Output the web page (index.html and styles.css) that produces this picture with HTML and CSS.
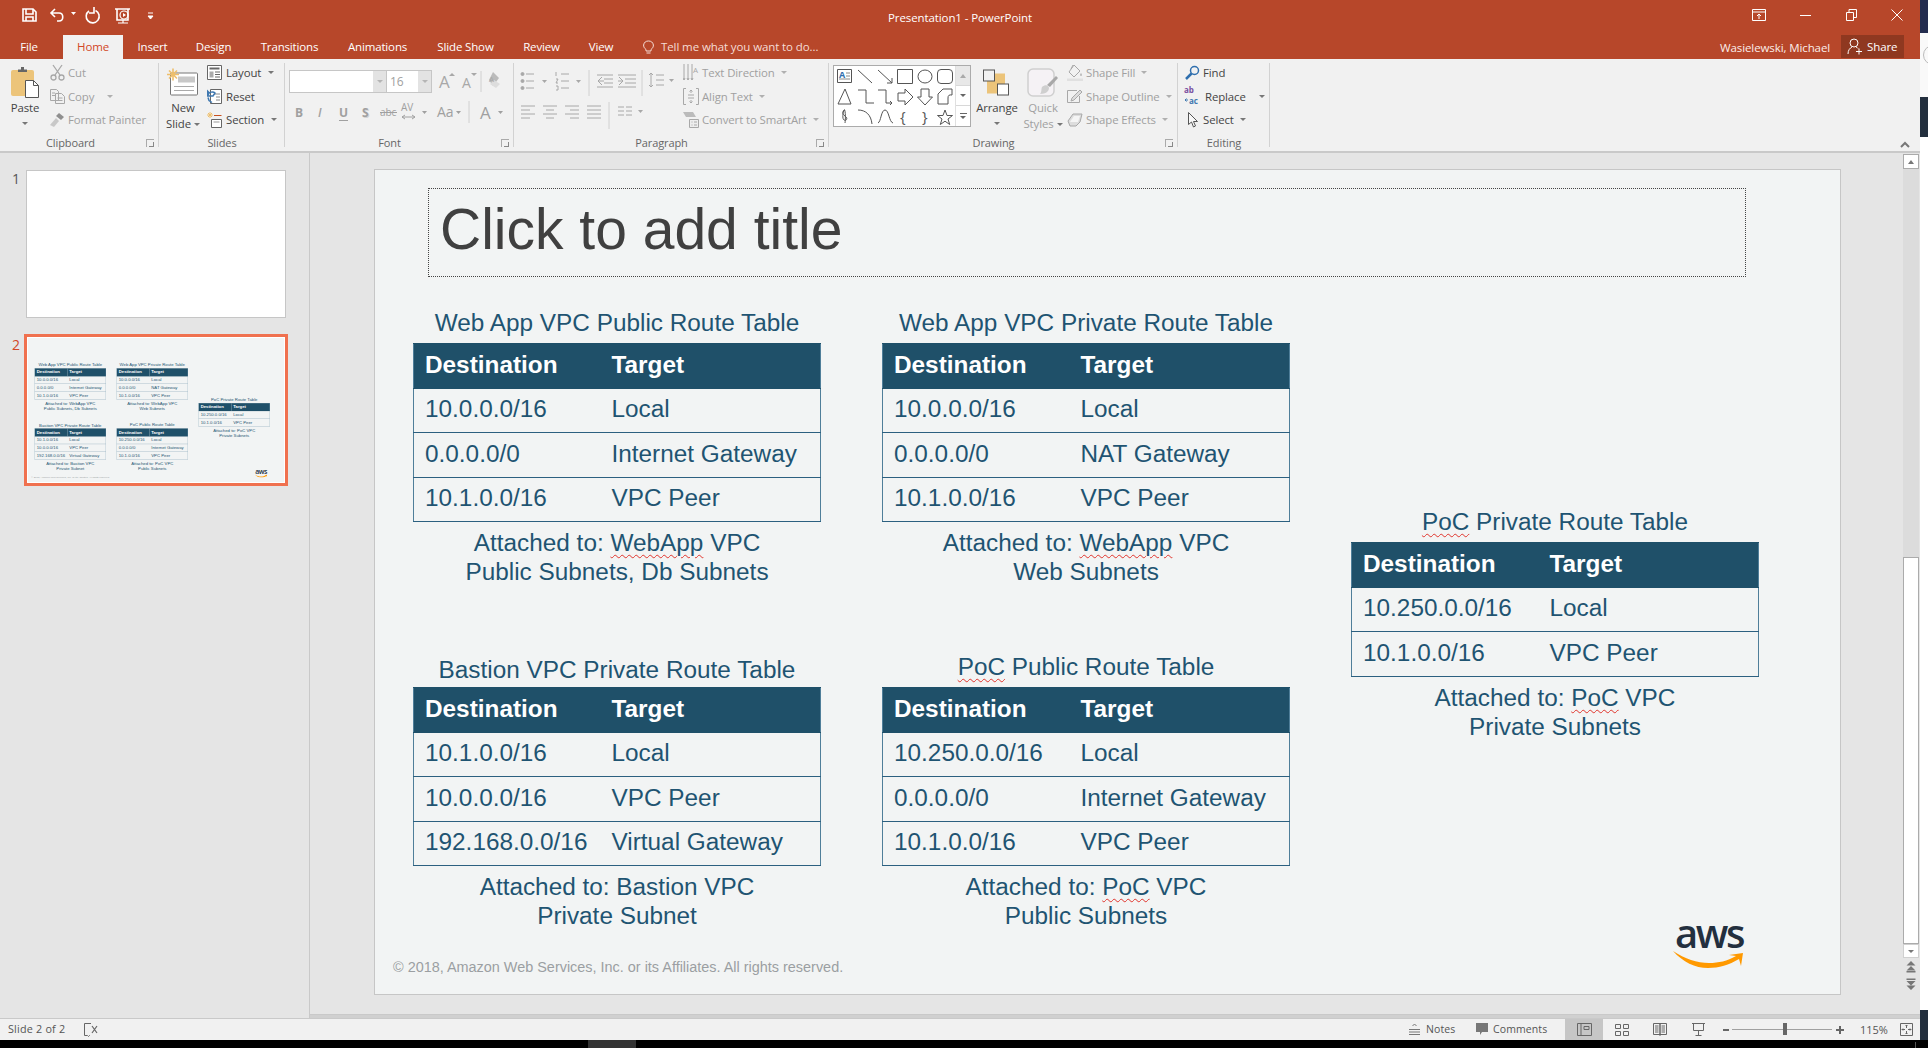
FILE: index.html
```html
<!DOCTYPE html>
<html lang="en">
<head>
<meta charset="utf-8">
<title>Presentation1 - PowerPoint</title>
<link rel="stylesheet" href="styles.css">
</head>
<body>
<div class="screen">
  <div class="upper">
    <div class="window">
      <header class="titlebar">
        <div class="title-row">
          <div class="qat">
            <svg class="qat-svg" width="170" height="35" viewBox="0 0 170 35" fill="none" stroke="#fff" stroke-width="1.6">
              <path d="M23 9h10l3 3v9H23z"/><path d="M26 9v5h7V9M26 21v-4h7v4"/>
              <path d="M55 9l-4 4 4 4M51 13h8c5 0 5 8 0 8h-2"/><path d="M71 12h5l-2.5 3z" fill="#fff" stroke="none"/>
              <path d="M95.500 10.500a6.500 6.500 0 1 1-6.500 .5"/><path d="M94 7v6h-5"/>
              <path d="M115 9h15M117 9v11h11V9"/><circle cx="124" cy="15" r="4" stroke-width="1.200"/><path d="M123 13l3 2-3 2z" fill="#fff" stroke="none"/><path d="M118 23h10M123 20v3" stroke-width="1.200"/>
              <path d="M148 13h5M148 16h5l-2.5 3z" fill="#fff" stroke-width="1"/>
            </svg>
          </div>
          <div class="doc-title">Presentation1 - PowerPoint</div>
          <div class="win-controls">
            <svg width="14" height="12" viewBox="0 0 14 12" fill="none" stroke="#fff"><path d="M.5.500h13v11H.5zM.5 3h13M7 10V5M5 7l2-2 2 2"/></svg>
            <svg width="11" height="11" viewBox="0 0 11 11" fill="none" stroke="#fff"><path d="M0 5.500h11"/></svg>
            <svg width="11" height="12" viewBox="0 0 11 12" fill="none" stroke="#fff"><path d="M.5 3.500h7v8h-7zM3 3.500V.5h7.500v8h-3"/></svg>
            <svg width="12" height="12" viewBox="0 0 12 12" fill="none" stroke="#fff"><path d="M.5.500l11 11M11.500.5l-11 11"/></svg>
          </div>
        </div>
        <div class="tab-row">
          <nav class="tabs">
            <span>File</span><span class="tab-on">Home</span><span>Insert</span><span>Design</span><span>Transitions</span><span>Animations</span><span>Slide Show</span><span>Review</span><span>View</span>
          </nav>
          <div class="tell">
            <svg width="11" height="16" viewBox="0 0 11 16" fill="none" stroke="#f5dcd5"><path d="M3 10.500C1 9 .6 7.500.6 6a5 5 0 0 1 9.800 0c0 1.500-.4 3-2.400 4.500V12H3zM3.500 14h4"/></svg>
            <span>Tell me what you want to do...</span>
          </div>
          <div class="user">Wasielewski, Michael</div>
          <div class="share">
            <svg width="16" height="17" viewBox="0 0 16 17" fill="none" stroke="#fff"><circle cx="7" cy="5" r="4"/><path d="M1 16c0-4 2-6 4-7M9 9c1 .3 1.500.8 2 1.500M9 13.500h6M12 10.500v6"/></svg>
            <span>Share</span>
          </div>
        </div>
      </header>

      <section class="ribbon">
        <div class="group g-clip">
          <div class="g-body">
            <div class="big b-paste">
              <svg width="30" height="31" viewBox="0 0 30 31"><rect x="1" y="3" width="23" height="26" rx="2" fill="#ecc47a"/><path d="M8 5V2.500h3V0h3v2.500h3V5z" fill="#666"/><path d="M15.500 13.500h8l5 5v12h-13z" fill="#fff" stroke="#555"/><path d="M23.500 13.500v5h5" fill="none" stroke="#555"/></svg>
              <span class="t-dark">Paste</span><i class="caret big-caret"></i>
            </div>
            <div class="col col-clip">
              <div class="sbtn off"><svg width="15" height="17" viewBox="0 0 15 17" fill="none" stroke="#a8a8a8" stroke-width="1.300"><path d="M3 1l7 10M12 1L5 11"/><circle cx="3.500" cy="13.500" r="2.500"/><circle cx="11.500" cy="13.500" r="2.500"/></svg><span>Cut</span></div>
              <div class="sbtn off"><svg width="15" height="15" viewBox="0 0 15 15" fill="none" stroke="#a8a8a8"><path d="M.5.500h6l2 2v9h-8z"/><path d="M5.500 4.500h6l3 3v7h-9zM2 4h3M2 6.500h3M7.500 9h5M7.500 11.500h5"/></svg><span>Copy</span><i class="caret wide"></i></div>
              <div class="sbtn off"><svg width="15" height="16" viewBox="0 0 15 16"><path d="M9 1l5 4-3 3-5-4z" fill="#8f8f8f"/><path d="M6 6l3 3-5 6-4-2z" fill="#c8c8c8"/></svg><span>Format Painter</span></div>
            </div>
          </div>
          <div class="g-label"><span>Clipboard</span><i class="launch"></i></div>
        </div>

        <div class="group g-slides">
          <div class="g-body">
            <div class="big b-new">
              <svg width="32" height="28" viewBox="0 0 32 28"><rect x="3.500" y="4.500" width="27" height="22" rx="1" fill="#fff" stroke="#777"/><rect x="11" y="8" width="17" height="6" fill="#c8c8c8"/><path d="M7 18h20M7 22h20" stroke="#aaa"/><path d="M6 0v12M0 6h12M2 2l8 8M10 2l-8 8" stroke="#eebf6c" stroke-width="1.600"/></svg>
              <span class="t-dark">New</span><span class="t-dark">Slide<i class="caret"></i></span>
            </div>
            <div class="col col-slides">
              <div class="sbtn"><svg width="15" height="15" viewBox="0 0 15 15" fill="#fff" stroke="#666"><path d="M.5.500h14v14H.5z"/><path d="M2.500 3.500h10" stroke-width="2"/><path d="M2.500 6.500h4v6h-4z" fill="#aaa" stroke="none"/><path d="M8 7h5M8 9.500h5M8 12h5" /></svg><span>Layout</span><i class="caret"></i></div>
              <div class="sbtn"><svg width="15" height="15" viewBox="0 0 15 15" fill="none"><path d="M3.500.500h11v14h-11z" fill="#fff" stroke="#666"/><path d="M7 5h6M9 8h4M9 11h4" stroke="#888"/><path d="M1 6c1-3 5-4 7-2L6 7H.500V2l2 2M1 8.500l1 3 3 2" stroke="#3f78b0" stroke-width="1.500"/></svg><span>Reset</span></div>
              <div class="sbtn"><svg width="15" height="16" viewBox="0 0 15 16" fill="none"><path d="M3 0v6M0 3h6M1 1l4 4M5 1L1 5" stroke="#eebf6c"/><path d="M7 3.500h7.500" stroke="#c8501f"/><path d="M4.500 7.500h10v8h-10z" fill="#fff" stroke="#666"/><path d="M6.500 10h6" stroke="#999"/></svg><span>Section</span><i class="caret"></i></div>
            </div>
          </div>
          <div class="g-label"><span>Slides</span></div>
        </div>

        <div class="group g-font">
          <div class="g-body g-stack">
            <div class="font-row">
              <div class="combo c-face"><i class="drop"><i class="caret pale"></i></i></div>
              <div class="combo c-size"><span>16</span><i class="drop"><i class="caret pale"></i></i></div>
              <svg class="font-tools" width="76" height="23" viewBox="0 0 76 23" fill="#a8a8a8">
                <text x="7" y="18" class="ic-a large">A</text><path d="M17 6h6l-3-3z"/>
                <text x="30" y="18" class="ic-a">A</text><path d="M39 3h6l-3 3z"/>
                <path d="M49 1v21" stroke="#d0d0d0" fill="none"/>
                <path d="M61 2l6 6-6 8-4-6z" fill="#bbb"/><path d="M58 14l6 4 4-4-6-4z" fill="#ddd"/><text x="57" y="12" class="ic-s">A</text>
              </svg>
            </div>
            <svg class="font-row2" width="228" height="25" viewBox="0 0 228 25" fill="#a0a0a0">
              <text x="10" y="17" class="ic-b">B</text>
              <text x="33" y="17" class="ic-i">I</text>
              <text x="54" y="17" class="ic-b">U</text><path d="M54 20h9v1h-9z"/>
              <text x="78" y="18" class="ic-b shadow">S</text><text x="77" y="17" class="ic-b">S</text>
              <text x="95" y="16" class="ic-m">abc</text><path d="M95 12h17v1H95z"/>
              <text x="116" y="11" class="ic-m">AV</text><path d="M117 17h13M117 17l3-2M117 17l3 2M130 17l-3-2M130 17l-3 2" stroke="#a0a0a0" fill="none"/>
              <path d="M137 11h5l-2.500 3z"/>
              <text x="152" y="17" class="ic-aa">Aa</text><path d="M171 11h5l-2.500 3z"/>
              <path d="M184 1v22" stroke="#d0d0d0" fill="none"/>
              <text x="195" y="19" class="ic-a large">A</text><path d="M213 11h5l-2.500 3z"/>
            </svg>
          </div>
          <div class="g-label"><span>Font</span><i class="launch"></i></div>
        </div>

        <div class="group g-para">
          <div class="g-body">
            <svg class="para-tools" width="165" height="74" viewBox="0 0 165 74" fill="none" stroke="#a8a8a8">
              <path d="M12 13h8M12 20h8M12 27h8" /><circle cx="8.500" cy="13" r="1.500" fill="#a8a8a8"/><circle cx="8.500" cy="20" r="1.500" fill="#a8a8a8"/><circle cx="8.500" cy="27" r="1.500" fill="#a8a8a8"/><path d="M28 19h5l-2.500 3z" fill="#a8a8a8" stroke="none"/>
              <path d="M47 13h8M47 20h8M47 27h8M42 11v4M42 18h2l-2 4h2M42 25h2v4h-2" /><path d="M62 19h5l-2.500 3z" fill="#a8a8a8" stroke="none"/>
              <path d="M75 9v26" stroke="#d0d0d0"/>
              <path d="M83 14h16M90 18h9M90 22h9M83 26h16M88 16l-4 4 4 4M84 20h6"/>
              <path d="M104 14h18M111 18h11M111 22h11M104 26h18M105 16l4 4-4 4M104 20h5"/>
              <path d="M128 9v26" stroke="#d0d0d0"/>
              <path d="M137 12v14M135 14l2-2 2 2M135 24l2 2 2-2M142 14h8M142 19h8M142 24h8"/><path d="M155 18h5l-2.500 3z" fill="#a8a8a8" stroke="none"/>
              <path d="M7 45h14M7 49h9M7 53h14M7 57h9M29 45h14M32 49h8M29 53h14M32 57h8M51 45h14M56 49h9M51 53h14M56 57h9M73 45h14M73 49h14M73 53h14M73 57h14"/>
              <path d="M95 41v27" stroke="#d0d0d0"/>
              <path d="M104 46h6M104 50h6M104 54h6M112 46h6M112 50h6M112 54h6"/><path d="M124 49h5l-2.500 3z" fill="#a8a8a8" stroke="none"/>
            </svg>
            <div class="col col-para">
              <div class="sbtn off"><svg width="16" height="17" viewBox="0 0 16 17" fill="none" stroke="#a8a8a8"><path d="M1 0v16M5 0v16M9 0v16M0 14l1 2 1-2M4 14l1 2 1-2M8 14l1 2 1-2"/><text x="10" y="9" class="ic-s" fill="#a8a8a8" stroke="none">A</text></svg><span>Text Direction</span><i class="caret"></i></div>
              <div class="sbtn off"><svg width="16" height="17" viewBox="0 0 16 17" fill="none" stroke="#a8a8a8"><path d="M3 .5H.5v16H3M13 .5h2.500v16H13M5 7h6M5 10h6M8 2v3M6.500 3.500L8 2l1.500 1.500M8 12v3M6.500 13.500L8 15l1.500-1.500"/></svg><span>Align Text</span><i class="caret"></i></div>
              <div class="sbtn off"><svg width="16" height="17" viewBox="0 0 16 17" fill="none"><path d="M0 1h10l3 5H3z" fill="#bbb"/><path d="M6.500 8.500h9v8h-9z" fill="#eee" stroke="#a8a8a8"/><path d="M8.500 11h1M11 11h3M8.500 14h1M11 14h3" stroke="#a8a8a8"/></svg><span>Convert to SmartArt</span><i class="caret"></i></div>
            </div>
          </div>
          <div class="g-label"><span>Paragraph</span><i class="launch"></i></div>
        </div>

        <div class="group g-draw">
          <div class="g-body">
            <div class="gallery">
              <svg width="121" height="60" viewBox="0 0 121 60" fill="none" stroke="#555">
                <path d="M3.500 3.500h14v13h-14z"/><path d="M12 7h4M12 10h4M5 13h11" stroke="#888"/><text x="5" y="12" class="ic-blue">A</text>
                <path d="M24 4l14 13"/><path d="M44 4l14 13M58 17v-5M58 17h-5"/>
                <path d="M63.500 3.500h15v14h-15z"/><ellipse cx="91" cy="10.500" rx="7" ry="6.500"/><rect x="103.500" y="3.500" width="15" height="14" rx="3.500"/>
                <path d="M11 23l6 15H4z"/><path d="M24 24h8v13h8"/><path d="M44 24h8v13h6M56 35l2 2-2 2"/>
                <path d="M64 27h7v-4l8 8-8 8v-4h-7z"/><path d="M87 23h8v8h3.500l-7.500 8-7.500-8H87z"/><path d="M104 38V28l5-5h9v6c-3-.5-4 .5-4 3v6z"/>
                <path d="M11 44c-3 1-3 4 0 6s2 5-1 4c-2-1-1-8 0-10s2 6 1 13"/><path d="M24 44c8 0 13 5 14 14"/><path d="M44 57c3-1 3-13 7-13s4 12 8 13"/>
                <text x="66" y="56" class="ic-br">{</text><text x="88" y="56" class="ic-br">}</text>
                <path d="M111 44l2 5.500h5.500l-4.500 3.500 1.700 5.500-4.700-3.300-4.700 3.300 1.700-5.500-4.500-3.500h5.500z"/>
              </svg>
              <div class="gal-scroll">
                <div class="gs gs-up"><i class="caret up"></i></div>
                <div class="gs"><i class="caret gdark"></i></div>
                <div class="gs gs-more"><i class="bar"></i><i class="caret gdark"></i></div>
              </div>
            </div>
            <div class="big b-arr">
              <svg width="30" height="28" viewBox="0 0 30 28"><rect x="5" y="5" width="18" height="20" fill="#ecc47a"/><rect x="1.500" y="1.500" width="11" height="11" fill="#f1f1f1" stroke="#555"/><rect x="15.500" y="15.500" width="11" height="11" fill="#fff" stroke="#555"/></svg>
              <span class="t-dark">Arrange</span><i class="caret big-caret"></i>
            </div>
            <div class="big b-quick">
              <svg width="32" height="29" viewBox="0 0 32 29"><rect x="1" y="1" width="26" height="27" rx="5" fill="#f5f2f5" stroke="#cfcfcf" stroke-width="1.500"/><path d="M29 8l2 2-8 9-3-2z" fill="#a8a8a8"/><path d="M15 19c3-3 7-2 7 1s-3 6-9 6c2-2 1-5 2-7z" fill="#cfcfcf"/></svg>
              <span class="t-off">Quick</span><span class="t-off">Styles<i class="caret"></i></span>
            </div>
            <div class="col col-draw">
              <div class="sbtn off"><svg width="16" height="17" viewBox="0 0 16 17" fill="none"><path d="M7 1l6 6-6 6-5-5z" stroke="#a8a8a8"/><path d="M6 1L4 5" stroke="#a8a8a8"/><path d="M14 9c1 1.500 1 3 0 3s-1-1.500 0-3z" fill="#a8a8a8"/><path d="M0 14.500h16V17H0z" fill="#e0e0e0"/></svg><span>Shape Fill</span><i class="caret"></i></div>
              <div class="sbtn off"><svg width="16" height="17" viewBox="0 0 16 17" fill="none" stroke="#a8a8a8"><path d="M10 2.500H.5v12h12V8"/><path d="M5 10l8-8 2 2-8 8-3 1z" fill="#ddd"/></svg><span>Shape Outline</span><i class="caret"></i></div>
              <div class="sbtn off"><svg width="16" height="17" viewBox="0 0 16 17"><path d="M1 10l5-7h9l-2 8-4 4H3z" fill="#ddd" stroke="#a8a8a8"/><path d="M3 11l4-6h6l-2 6z" fill="#f5f5f5"/></svg><span>Shape Effects</span><i class="caret"></i></div>
            </div>
          </div>
          <div class="g-label"><span>Drawing</span><i class="launch"></i></div>
        </div>

        <div class="group g-edit">
          <div class="g-body">
            <div class="col col-edit">
              <div class="sbtn"><svg width="15" height="15" viewBox="0 0 15 15" fill="none" stroke="#2f6fae" stroke-width="1.500"><circle cx="9.500" cy="5.500" r="4"/><path d="M6.500 8.500L1 14" stroke-width="2.500"/></svg><span>Find</span></div>
              <div class="sbtn"><svg class="ic-rep" width="16" height="18" viewBox="0 0 16 18"><text x="0" y="6" class="ic-ab">ab</text><text x="5" y="17" class="ic-ac">ac</text><path d="M1 13h3M2.500 11.500L1 13l1.500 1.500" stroke="#3f78b0" fill="none"/></svg><span>Replace</span><i class="caret wide"></i></div>
              <div class="sbtn"><svg class="ic-sel" width="15" height="16" viewBox="0 0 15 16" fill="#f8f8f8" stroke="#555"><path d="M3.500.500v12l3-2.500 2 5 2-1-2-4.500h4z"/></svg><span>Select</span><i class="caret"></i></div>
            </div>
          </div>
          <div class="g-label"><span>Editing</span></div>
        </div>

        <svg class="collapse" width="10" height="7" viewBox="0 0 10 7" fill="none" stroke="#777" stroke-width="2"><path d="M1 6l4-4 4 4"/></svg>
      </section>

      <main class="workspace">
        <aside class="panel">
          <div class="thumb-row">
            <span class="num">1</span>
            <div class="thumb-plain"></div>
          </div>
          <div class="thumb-row row-active">
            <span class="num num-on">2</span>
            <div class="thumb-active">
              <div class="thumb-clip">
                <div class="canvas">
                  <article class="card card-a"><h3>Web App VPC Public Route Table</h3><table><thead><tr><th>Destination</th><th>Target</th></tr></thead><tbody><tr><td>10.0.0.0/16</td><td>Local</td></tr><tr><td>0.0.0.0/0</td><td>Internet Gateway</td></tr><tr><td>10.1.0.0/16</td><td>VPC Peer</td></tr></tbody></table><p>Attached to: WebApp VPC<br>Public Subnets, Db Subnets</p></article>
                  <article class="card card-b"><h3>Web App VPC Private Route Table</h3><table><thead><tr><th>Destination</th><th>Target</th></tr></thead><tbody><tr><td>10.0.0.0/16</td><td>Local</td></tr><tr><td>0.0.0.0/0</td><td>NAT Gateway</td></tr><tr><td>10.1.0.0/16</td><td>VPC Peer</td></tr></tbody></table><p>Attached to: WebApp VPC<br>Web Subnets</p></article>
                  <article class="card card-c"><h3>Bastion VPC Private Route Table</h3><table><thead><tr><th>Destination</th><th>Target</th></tr></thead><tbody><tr><td>10.1.0.0/16</td><td>Local</td></tr><tr><td>10.0.0.0/16</td><td>VPC Peer</td></tr><tr><td>192.168.0.0/16</td><td>Virtual Gateway</td></tr></tbody></table><p>Attached to: Bastion VPC<br>Private Subnet</p></article>
                  <article class="card card-d"><h3>PoC Public Route Table</h3><table><thead><tr><th>Destination</th><th>Target</th></tr></thead><tbody><tr><td>10.250.0.0/16</td><td>Local</td></tr><tr><td>0.0.0.0/0</td><td>Internet Gateway</td></tr><tr><td>10.1.0.0/16</td><td>VPC Peer</td></tr></tbody></table><p>Attached to: PoC VPC<br>Public Subnets</p></article>
                  <article class="card card-e"><h3>PoC Private Route Table</h3><table><thead><tr><th>Destination</th><th>Target</th></tr></thead><tbody><tr><td>10.250.0.0/16</td><td>Local</td></tr><tr><td>10.1.0.0/16</td><td>VPC Peer</td></tr></tbody></table><p>Attached to: PoC VPC<br>Private Subnets</p></article>
                  <div class="copyright">© 2018, Amazon Web Services, Inc. or its Affiliates. All rights reserved.</div>
                  <div class="aws"><span>aws</span><svg width="72" height="20" viewBox="0 0 72 20"><path d="M0 3c12 8 24 12 36 12 10 0 18-2 27-7l-7-1 14-2-2 13-2-7c-10 6-20 9-31 9C22 20 10 14 0 3z" fill="#f90"/></svg></div>
                </div>
              </div>
            </div>
          </div>
        </aside>
        <div class="stage">
          <div class="stage-inner">
            <div class="slide">
              <div class="canvas">
                <div class="placeholder">Click to add title</div>
                <article class="card card-a"><h3>Web App VPC Public Route Table</h3><table><thead><tr><th>Destination</th><th>Target</th></tr></thead><tbody><tr><td>10.0.0.0/16</td><td>Local</td></tr><tr><td>0.0.0.0/0</td><td>Internet Gateway</td></tr><tr><td>10.1.0.0/16</td><td>VPC Peer</td></tr></tbody></table><p>Attached to: <span class="sq">WebApp</span> VPC<br>Public Subnets, Db Subnets</p></article>
                <article class="card card-b"><h3>Web App VPC Private Route Table</h3><table><thead><tr><th>Destination</th><th>Target</th></tr></thead><tbody><tr><td>10.0.0.0/16</td><td>Local</td></tr><tr><td>0.0.0.0/0</td><td>NAT Gateway</td></tr><tr><td>10.1.0.0/16</td><td>VPC Peer</td></tr></tbody></table><p>Attached to: <span class="sq">WebApp</span> VPC<br>Web Subnets</p></article>
                <article class="card card-c"><h3>Bastion VPC Private Route Table</h3><table><thead><tr><th>Destination</th><th>Target</th></tr></thead><tbody><tr><td>10.1.0.0/16</td><td>Local</td></tr><tr><td>10.0.0.0/16</td><td>VPC Peer</td></tr><tr><td>192.168.0.0/16</td><td>Virtual Gateway</td></tr></tbody></table><p>Attached to: Bastion VPC<br>Private Subnet</p></article>
                <article class="card card-d"><h3><span class="sq">PoC</span> Public Route Table</h3><table><thead><tr><th>Destination</th><th>Target</th></tr></thead><tbody><tr><td>10.250.0.0/16</td><td>Local</td></tr><tr><td>0.0.0.0/0</td><td>Internet Gateway</td></tr><tr><td>10.1.0.0/16</td><td>VPC Peer</td></tr></tbody></table><p>Attached to: <span class="sq">PoC</span> VPC<br>Public Subnets</p></article>
                <article class="card card-e"><h3><span class="sq">PoC</span> Private Route Table</h3><table><thead><tr><th>Destination</th><th>Target</th></tr></thead><tbody><tr><td>10.250.0.0/16</td><td>Local</td></tr><tr><td>10.1.0.0/16</td><td>VPC Peer</td></tr></tbody></table><p>Attached to: <span class="sq">PoC</span> VPC<br>Private Subnets</p></article>
                <div class="copyright">© 2018, Amazon Web Services, Inc. or its Affiliates. All rights reserved.</div>
                <div class="aws"><span>aws</span><svg width="72" height="20" viewBox="0 0 72 20"><path d="M0 3c12 8 24 12 36 12 10 0 18-2 27-7l-7-1 14-2-2 13-2-7c-10 6-20 9-31 9C22 20 10 14 0 3z" fill="#f90"/></svg></div>
              </div>
            </div>
            <div class="vscroll">
              <div class="vs-btn vs-up"><i class="caret up dark"></i></div>
              <div class="vs-track"></div>
              <div class="vs-thumb"></div>
              <div class="vs-btn vs-down"><i class="caret dark"></i></div>
              <svg class="vs-nav" width="10" height="29" viewBox="0 0 10 29" fill="#777"><path d="M5 0l4.500 4.500h-9zM5 5l4.500 4.500h-9zM.5 10h9v1.500h-9zM.5 17.500h9V19h-9zM.5 20h9L5 24.500zM.5 24.500h9L5 29z"/></svg>
            </div>
          </div>
        </div>
      </main>

      <footer class="statusbar">
        <span class="st-slide">Slide 2 of 2</span>
        <svg class="st-spell" width="14" height="14" viewBox="0 0 14 14" fill="none" stroke="#666"><path d="M6 .5H.5v12h3l1 1 1-1H6M6 .5h1"/><path d="M8 3l5 7M13 3l-5 7" stroke-width="1.200"/></svg>
        <div class="st-right">
          <div class="st-item st-notes"><svg width="11" height="12" viewBox="0 0 11 12" fill="none" stroke="#777"><path d="M0 6.500h11M0 9h11M0 11.500h11M3.500 3l2-2 2 2"/></svg><span>Notes</span></div>
          <div class="st-item st-comments"><svg width="12" height="12" viewBox="0 0 12 12" fill="#777"><path d="M0 0h12v9H6l-2 3V9H0z"/></svg><span>Comments</span></div>
          <div class="st-view st-on"><svg width="15" height="13" viewBox="0 0 15 13" fill="none" stroke="#666"><path d="M.5.500h14v12H.5zM4 .5v12M7 3.500h5v3H7z"/></svg></div>
          <div class="st-view"><svg width="14" height="12" viewBox="0 0 14 12" fill="none" stroke="#666"><path d="M.5.500h5v4h-5zM8.500.500h5v4h-5zM.5 7.500h5v4h-5zM8.500 7.500h5v4h-5z"/></svg></div>
          <div class="st-view"><svg width="14" height="13" viewBox="0 0 14 13" fill="none" stroke="#666"><path d="M.5.500H7v11H.5zM7 .5h6.500v11H7zM2 3h3.500M2 5h3.500M2 7h3.500M2 9h3.500M8.500 3H12M8.500 5H12M8.500 7H12M8.500 9H12M7 11.500V13"/></svg></div>
          <div class="st-view"><svg width="13" height="13" viewBox="0 0 13 13" fill="none" stroke="#666"><path d="M0 .5h13M1.500 1v6.500h10V1M6.500 8v4M3.500 12.500h6" /></svg></div>
          <div class="zoom">
            <span class="z-minus"></span>
            <div class="z-track"><i class="z-thumb"></i></div>
            <span class="z-plus"></span>
          </div>
          <span class="z-pct">115%</span>
          <svg class="st-fit" width="13" height="13" viewBox="0 0 13 13" fill="none" stroke="#666"><path d="M.5.500h12v12H.5zM6.500 2v3M5.500 3l1-1 1 1M6.500 11V8M5.500 10l1 1 1-1M2 6.500h3M3 5.500l-1 1 1 1M11 6.500H8M10 5.500l1 1-1 1"/></svg>
        </div>
      </footer>
    </div>
    <div class="backdrop">
      <div class="bd-navy"></div>
      <div class="bd-light"><i class="bd-arc"></i></div>
      <div class="bd-slate"></div>
      <div class="bd-white"></div>
      <div class="bd-slate2"></div>
    </div>
  </div>
  <div class="taskbar">
    <i class="task-active"></i>
    <span class="clock">9:51 PM</span>
    <i class="task-line"></i>
  </div>
</div>
</body>
</html>
```

FILE: styles.css
```css
* { box-sizing: border-box; }
html, body { margin: 0; padding: 0; }
body { width: 1928px; height: 1048px; overflow: hidden; background: #000; font-family: "Open Sans", "Liberation Sans", sans-serif; }
i { display: inline-block; font-style: normal; }
.screen { width: 1928px; height: 1048px; display: flex; flex-direction: column; }
.upper { height: 1040px; display: flex; }
.window { width: 1920px; height: 1040px; display: flex; flex-direction: column; background: #e5e5e5; }

/* title bar */
.titlebar { height: 59px; background: #b7472a; color: #fff; flex: none; }
.title-row { height: 35px; display: grid; grid-template-columns: 1fr auto 1fr; align-items: center; }
.qat-svg { display: block; }
.doc-title { font-size: 11.5px; letter-spacing: -.1px; color: #fff; }
.win-controls { justify-self: end; width: 168px; display: flex; justify-content: space-between; align-items: center; padding-right: 17px; margin-top: -5px; }
.tab-row { height: 24px; display: flex; align-items: stretch; }
.tabs { display: grid; grid-template-columns: 63px 60px 59px 63px 89px 87px 89px 63px 56px; font-size: 11.5px; width: 629px; letter-spacing: -.15px; }
.tabs span { display: flex; align-items: center; justify-content: center; padding-bottom: 1px; }
.tabs span:first-child { padding-right: 5px; }
.tab-on { background: #f1f1f1; color: #d24726; }
.tell { margin-left: 14px; display: flex; align-items: center; gap: 7px; font-size: 11.5px; letter-spacing: -.1px; color: #f5dcd5; width: 1077px; padding-bottom: 1px; }
.user { width: 121px; font-size: 11.5px; letter-spacing: -.1px; display: flex; align-items: center; color: #fbeee9; }
.share { width: 63px; height: 23px; background: #8f3820; display: flex; align-items: center; gap: 4px; padding-left: 6px; font-size: 11.5px; letter-spacing: -.1px; }

/* ribbon */
.ribbon { height: 94px; flex: none; background: #f1f1f1; border-bottom: 2px solid #c9c9c9; padding-top: 2px; display: flex; font-size: 11.4px; letter-spacing: -.1px; color: #444; }
.group { position: relative; height: 90px; display: flex; flex-direction: column; flex: none; }
.group::after { content: ""; position: absolute; top: 2px; bottom: 4px; right: 0; width: 1px; background: #d2d2d2; }
.g-clip { width: 159px; }
.g-slides { width: 126px; }
.g-font { width: 229px; }
.g-para { width: 315px; }
.g-draw { width: 349px; }
.g-edit { width: 92px; }
.g-body { height: 74px; display: flex; }
.g-stack { flex-direction: column; }
.g-label { position: relative; height: 16px; line-height: 16px; text-align: center; color: #666; font-size: 11px; padding-right: 20px; }
.g-slides .g-label, .g-edit .g-label { padding-right: 0; }
.launch { position: absolute; right: 5px; top: 4px; width: 8px; height: 8px; border: 1px solid #aaa; border-width: 1px 0 0 1px; }
.launch::after { content: ""; position: absolute; right: 0; bottom: 0; width: 4px; height: 4px; border-right: 1px solid #888; border-bottom: 1px solid #888; }
.g-clip .g-label { padding-right: 18px; }
.col { display: grid; grid-auto-rows: 23.5px; }
.sbtn { display: flex; align-items: center; gap: 3px; white-space: nowrap; }
.sbtn svg { flex: none; }
.off { color: #a0a0a0; }
.caret { width: 0; height: 0; border-left: 3px solid transparent; border-right: 3px solid transparent; border-top: 3px solid #777; margin-left: 3px; vertical-align: 2px; }
.off .caret { border-top-color: #b0b0b0; }
.caret.wide { margin-left: 10px; }
.caret.up { border-top: 0; border-bottom: 4px solid #aaa; }
.caret.pale { border-top-color: #b5b5b5; margin: 0; }
.caret.gdark { border-top-color: #666; margin: 0; }
.big { display: flex; flex-direction: column; align-items: center; width: 40px; flex: none; line-height: 16px; white-space: nowrap; }
.big svg { margin-top: 6px; margin-bottom: 2px; flex: none; height: 31px; }
.big .t-dark, .big .t-off { height: 16px; }
.t-off { color: #a0a0a0; }
.big-caret { margin: 6px 0 0; }
.b-paste { margin-left: 5px; }
.col-clip { margin-left: 5px; }
.b-new { margin-left: 4px; }
.col-slides { margin-left: 4px; }
.col-slides .sbtn { gap: 4px; }
.font-row { display: flex; height: 23px; margin-top: 9px; margin-left: 4px; }
.combo { height: 23px; background: #fff; border: 1px solid #c6c6c6; position: relative; }
.c-face { width: 98px; }
.c-size { width: 45px; border-left: 0; padding-left: 3px; line-height: 21px; color: #a0a0a0; font-size: 12px; }
.drop { position: absolute; right: 0; top: 0; bottom: 0; width: 13px; background: #e3e3e3; display: flex; align-items: center; justify-content: center; }
.font-tools { display: block; }
.font-row2 { display: block; margin-top: 7px; }
.ic-a { font: 14px "Open Sans", sans-serif; }
.ic-a.large { font-size: 17px; }
.ic-s { font: 8px "Open Sans", sans-serif; }
.ic-b { font: 700 12px "Open Sans", sans-serif; }
.shadow { fill: #d4d4d4; }
.ic-i { font: italic 600 12px "Open Sans", sans-serif; }
.ic-m { font: 10px "Open Sans", sans-serif; }
.ic-aa { font: 14px "Open Sans", sans-serif; }
.ic-blue { font: 700 9px "Open Sans", sans-serif; fill: #2f6fae; stroke: none; }
.ic-br { font: 15px "Open Sans", sans-serif; fill: #555; stroke: none; }
.ic-ab { font: 700 8px/1 "Open Sans", sans-serif; fill: #7a4fa0; }
.ic-ac { font: 700 8px/1 "Open Sans", sans-serif; fill: #3f78b0; }
.para-tools { display: block; flex: none; width: 165px; }
.col-para { margin-left: 4px; }
.gallery { margin: 4px 0 0 4px; width: 138px; height: 62px; background: #fff; border: 1px solid #ababab; display: flex; flex: none; }
.gallery svg { flex: none; display: block; }
.gal-scroll { width: 15px; border-left: 1px solid #e0e0e0; display: grid; grid-template-rows: 1fr 1fr 1fr; }
.gs { display: flex; flex-direction: column; align-items: center; justify-content: center; gap: 2px; border-bottom: 1px solid #d8d8d8; }
.gs-up { background: #e8e8e8; }
.gs-up .caret { margin: 0; }
.gs-more { border-bottom: 0; }
.bar { width: 7px; height: 1px; background: #666; }
.b-arr { margin-left: 6px; }
.b-quick { margin-left: 6px; }
.col-draw { margin-left: 4px; }
.col-edit { margin-left: 7px; }
.ic-rep { margin-right: 2px; margin-left: -1px; overflow: visible; }
.collapse { margin-left: auto; margin-right: 10px; align-self: flex-end; margin-bottom: 3px; }

/* workspace */
.workspace { flex: 1; display: flex; min-height: 0; }
.panel { width: 310px; flex: none; border-right: 1px solid #c9c9c9; padding-top: 17px; }
.thumb-row { display: flex; padding-left: 12px; }
.num { width: 14px; color: #555; font-size: 14px; line-height: 17px; flex: none; }
.thumb-plain { width: 260px; height: 148px; background: #fff; border: 1px solid #c6c6c6; }
.row-active { margin-top: 16px; }
.num-on { color: #d24726; width: 12px; padding-top: 2px; }
.thumb-active { width: 264px; height: 152px; border: 3px solid #f0714f; background: #fff; padding: 1px; }
.thumb-clip { width: 256px; height: 144px; overflow: hidden; background: #f2f4f4; }
.thumb-clip .canvas { transform: scale(.17475); transform-origin: 0 0; }
.stage { flex: 1; border-bottom: 3px solid #d0d0d0; box-shadow: inset 0 -1px 0 #c9c9c9; min-width: 0; }
.stage-inner { height: 100%; display: flex; padding-left: 64px; }
.slide { width: 1467px; height: 826px; margin-top: 16px; flex: none; border: 1px solid #c6c6c6; background: #f2f4f4; }

/* slide canvas */
.canvas { position: relative; width: 1465px; height: 824px; background: #f2f4f4; font-family: "Liberation Sans", Arial, sans-serif; }
.placeholder { position: absolute; left: 53px; top: 18px; width: 1318px; height: 89px; border: 1px dotted #444; padding: 8px 0 0 11px; font-size: 57px; line-height: 64px; color: #404040; }
.card { position: absolute; width: 408px; color: #1f5472; font-size: 24.35px; line-height: 29px; text-align: center; }
.card h3 { margin: 0 0 6px; font: inherit; white-space: nowrap; }
.card p { margin: 6px 0 0; }
.card table { width: 408px; border-collapse: collapse; table-layout: fixed; text-align: left; border-left: 1px solid #4f7e99; border-right: 1px solid #4f7e99; }
.card th { height: 45px; background: #1f5069; color: #fff; font-weight: 700; padding: 0 0 3px 11px; border: 1px solid #1f5069; border-left: 0; border-right: 0; }
.card td { height: 44px; padding: 0 0 4px 11px; border: 1px solid #2c6080; border-left: 0; border-right: 0; white-space: nowrap; }
.card tr:nth-child(2) td { height: 45px; }
.card th:first-child, .card td:first-child { width: 187px; }
.card-a { left: 38px; top: 138px; }
.card-b { left: 507px; top: 138px; }
.card-c { left: 38px; top: 485px; }
.card-c h3 { margin-bottom: 3px; }
.card-d { left: 507px; top: 482px; }
.card-e { left: 976px; top: 337px; }
.sq { text-decoration: underline wavy #e0342c 1px; text-underline-offset: 3px; }
.copyright { position: absolute; left: 18px; top: 789px; font-size: 14.43px; line-height: 16px; color: #9b9fa2; white-space: nowrap; }
.aws { position: absolute; left: 1298px; top: 745px; width: 72px; display: flex; flex-direction: column; align-items: center; }
.aws span { font-family: "Open Sans", sans-serif; font-size: 40px; line-height: 36px; height: 30px; color: #232f3e; font-weight: 600; letter-spacing: -2.5px; }
.aws svg { display: block; margin-top: 3px; }

/* scrollbar */
.vscroll { margin-left: auto; width: 16px; display: flex; flex-direction: column; align-items: stretch; position: relative; left: -1px; flex: none; }
.vs-btn { display: flex; align-items: center; justify-content: center; background: #fff; }
.vs-up { margin-top: 1px; height: 15px; border: 1px solid #ababab; }
.vs-track { height: 388px; background: #dcdcdc; }
.vs-thumb { height: 387px; background: #fff; border: 1px solid #ababab; }
.vs-down { height: 14px; border: 1px solid #d0d0d0; }
.vs-down .caret, .vs-up .caret { margin: 0; }
.caret.dark { border-top-color: #777; }
.caret.up.dark { border-bottom-color: #777; }
.vs-nav { margin: 3px 0 0 3px; flex: none; }

/* status bar */
.statusbar { height: 22px; flex: none; background: #f1f1f1; border-top: 1px solid #c9c9c9; display: flex; align-items: center; font-size: 10.8px; color: #555; }
.st-slide { margin-left: 8px; width: 76px; padding-bottom: 2px; letter-spacing: .2px; }
.st-right { margin-left: auto; height: 21px; display: flex; align-items: center; }
.st-item { display: flex; align-items: center; height: 21px; padding-bottom: 2px; font-size: 10.5px; letter-spacing: .1px; }
.st-notes { width: 67px; gap: 6px; }
.st-comments { width: 89px; gap: 5px; }
.st-view { width: 38px; height: 21px; display: flex; align-items: center; justify-content: center; }
.st-on { background: #c6c6c6; }
.zoom { display: flex; align-items: center; margin-left: 3px; }
.z-minus { width: 6px; height: 2px; background: #666; margin: 0 3px; }
.z-track { position: relative; width: 100px; height: 1px; background: #a0a0a0; margin: 0 3px 0 0; }
.z-thumb { position: absolute; left: 51px; top: -6px; width: 4px; height: 12px; background: #666; }
.z-plus { position: relative; width: 8px; height: 2px; background: #666; margin: 0 0 0 1px; }
.z-plus::after { content: ""; position: absolute; left: 3px; top: -3px; width: 2px; height: 8px; background: #666; }
.z-pct { margin-left: 16px; width: 40px; font-size: 11px; padding-bottom: 1px; }
.st-fit { margin-right: 7px; }

/* background window sliver + taskbar */
.backdrop { width: 8px; height: 1040px; display: flex; flex-direction: column; background: #fff; }
.bd-navy { height: 33px; background: #232c4e; }
.bd-light { height: 64px; background: #f9f9f9; position: relative; overflow: hidden; }
.bd-arc { position: absolute; left: 3px; top: 12px; width: 20px; height: 20px; border: 1px solid #bbb; border-radius: 50%; }
.bd-slate { height: 40px; background: #232f3e; }
.bd-white { height: 873px; background: #fff; }
.bd-slate2 { height: 30px; background: #232f3e; }
.taskbar { height: 8px; background: #000; display: flex; overflow: hidden; color: #fff; font: 12px/16px "Open Sans", sans-serif; }
.task-active { width: 48px; height: 8px; margin-left: 588px; background: #333; }
.clock { margin-left: 1177px; width: 102px; padding-top: 5px; white-space: nowrap; }
.task-line { width: 1px; height: 6px; margin-top: 2px; background: #555; }
```
